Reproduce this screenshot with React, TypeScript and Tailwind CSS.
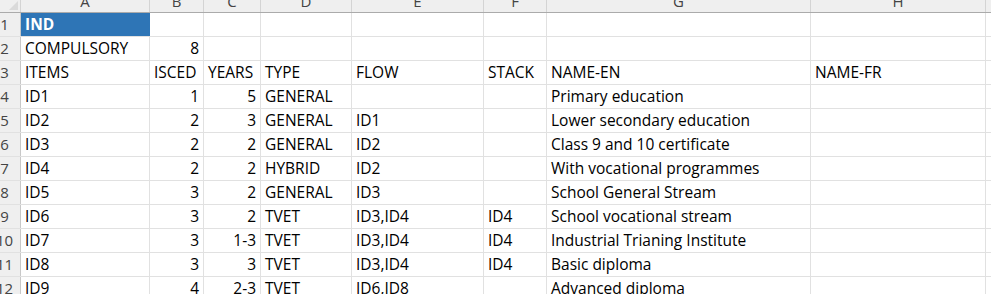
import React from "react";

const cols = [
  { key: "A", w: "w-[129px]" },
  { key: "B", w: "w-[54px]" },
  { key: "C", w: "w-[57px]" },
  { key: "D", w: "w-[91px]" },
  { key: "E", w: "w-[132px]" },
  { key: "F", w: "w-[63px]" },
  { key: "G", w: "w-[264px]" },
  { key: "H", w: "w-[175px]" },
];

const rows: string[][] = [
  ["IND"],
  ["COMPULSORY", "8"],
  ["ITEMS", "ISCED", "YEARS", "TYPE", "FLOW", "STACK", "NAME-EN", "NAME-FR"],
  ["ID1", "1", "5", "GENERAL", "", "", "Primary education"],
  ["ID2", "2", "3", "GENERAL", "ID1", "", "Lower secondary education"],
  ["ID3", "2", "2", "GENERAL", "ID2", "", "Class 9 and 10 certificate"],
  ["ID4", "2", "2", "HYBRID", "ID2", "", "With vocational programmes"],
  ["ID5", "3", "2", "GENERAL", "ID3", "", "School General Stream"],
  ["ID6", "3", "2", "TVET", "ID3,ID4", "ID4", "School vocational stream"],
  ["ID7", "3", "1-3", "TVET", "ID3,ID4", "ID4", "Industrial Trianing Institute"],
  ["ID8", "3", "3", "TVET", "ID3,ID4", "ID4", "Basic diploma"],
  ["ID9", "4", "2-3", "TVET", "ID6,ID8", "", "Advanced diploma"],
];

export default function App() {
  return (
    <div className="w-[991px] h-[294px] overflow-hidden bg-white font-['Open_Sans','Liberation_Sans',sans-serif] text-[15.5px] text-black">
      {/* column letters */}
      <div className="flex h-[13px] bg-[#efefef] border-b border-[#ababab]">
        <div className="relative w-[21px] shrink-0 border-r border-[#d4d4d4]">
          <div className="absolute right-[2px] bottom-[2px] w-0 h-0 border-l-[9px] border-l-transparent border-b-[9px] border-b-[#dadada]" />
        </div>
        {cols.map((c) => (
          <div
            key={c.key}
            className={`${c.w} shrink-0 flex items-end justify-center overflow-hidden border-r border-[#d4d4d4] pb-[3px] text-[15px] leading-none text-[#444]`}
          >
            {c.key}
          </div>
        ))}
        <div className="flex-1" />
      </div>

      {rows.map((r, i) => (
        <div key={i} className="flex h-[24px] border-b border-[#e1e1e1]">
          <div className="w-[21px] shrink-0 overflow-hidden bg-[#efefef] border-r border-[#c8c8c8] flex items-center">
            <span className="w-[31px] shrink-0 -ml-[11px] text-center text-[15px] text-[#444]">{i + 1}</span>
          </div>
          {cols.map((c, j) => {
            const v = r[j] ?? "";
            const right = i !== 2 && (j === 1 || j === 2);
            const blue = i === 0 && j === 0;
            return (
              <div
                key={c.key}
                className={`${c.w} shrink-0 flex items-center whitespace-nowrap px-[4px] ${
                  right ? "justify-end" : "justify-start"
                } ${blue ? "bg-[#2e75b6] text-white font-bold" : "border-r border-[#e1e1e1]"}`}
              >
                {v}
              </div>
            );
          })}
          <div className="flex-1" />
        </div>
      ))}
    </div>
  );
}
